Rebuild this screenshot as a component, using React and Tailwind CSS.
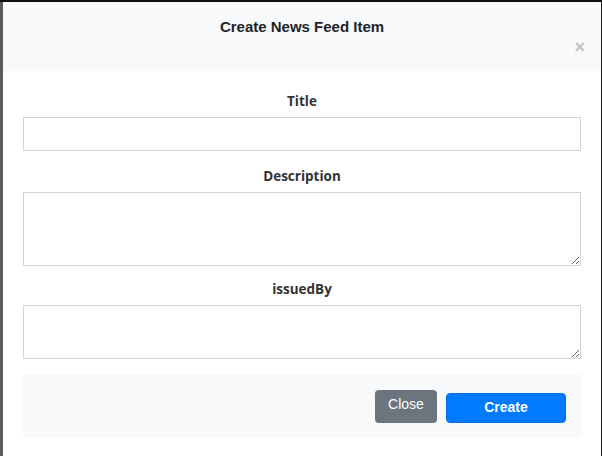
import React from 'react';

const fields = [
  { label: 'Title', kind: 'input', h: 'h-[34px]', mb: 'mb-[16px]' },
  { label: 'Description', kind: 'textarea', h: 'h-[74px]', mb: 'mb-[14px]' },
  { label: 'issuedBy', kind: 'textarea', h: 'h-[54px]', mb: 'mb-[15px]' }
];

export default function App() {
  return (
    <div className="w-[602px] h-[456px] overflow-hidden bg-[#555] relative">
      {/* page behind the overlay */}
      <div className="h-[2px] bg-[#111]" />
      <div className="flex h-[454px]">
        <div className="w-[3px] bg-[#5b5b5b]" />
        <div className="w-[598px] bg-white flex flex-col">
          {/* header */}
          <div className="h-[69px] bg-[#f8f9fa] relative flex justify-center">
            <h2 className="mt-[16px] text-[15px] font-bold text-[#212529] font-['Liberation_Sans',Arial,sans-serif] leading-[18px]">
              Create News Feed Item
            </h2>
            <button className="absolute right-[16px] top-[36px] text-[18px] leading-[18px] font-bold text-[#c4c4c4] font-['Liberation_Sans',Arial,sans-serif]">
              ×
            </button>
          </div>

          {/* body */}
          <div className="px-[20px] pt-[21px]">
            {fields.map((f) => (
              <div key={f.label} className={`${f.mb} flex flex-col items-center`}>
                <label className="text-[13.5px] font-bold text-[#333] font-['Open_Sans',sans-serif] leading-[18px] mb-[7px]">
                  {f.label}
                </label>
                {f.kind === 'input' ? (
                  <input
                    type="text"
                    className={`w-full ${f.h} border border-[#ced4da] bg-white outline-none`}
                  />
                ) : (
                  <textarea
                    className={`w-full ${f.h} border border-[#ced4da] bg-white outline-none resize-y block`}
                  />
                )}
              </div>
            ))}

            {/* footer */}
            <div className="h-[64px] bg-[#f8f9fa] flex items-center justify-end pr-[15px] gap-[9px] font-['Liberation_Sans',Arial,sans-serif]">
              <button className="w-[62px] h-[33px] rounded-[4px] bg-[#6c757d] text-white text-[14px] pb-[3px]">
                Close
              </button>
              <button className="w-[120px] h-[30px] mt-[3px] rounded-[4px] bg-[#007bff] border border-[#0a6fe0] text-white text-[14px] font-bold">
                Create
              </button>
            </div>
          </div>
        </div>
        <div className="w-[1px] bg-[#222]" />
      </div>
    </div>
  );
}
